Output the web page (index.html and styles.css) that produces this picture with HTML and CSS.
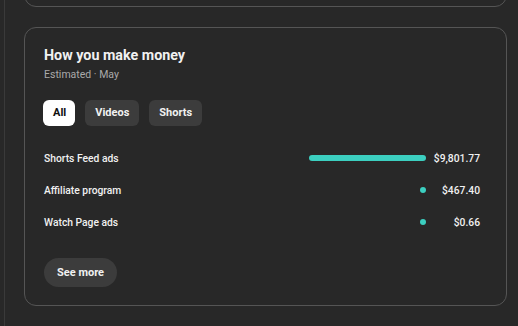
FILE: index.html
```html
<!DOCTYPE html>
<html lang="en">
<head>
    <meta charset="UTF-8">
    <title>Revenue</title>
    <link rel="stylesheet" href="styles.css">
</head>
<body>
<div class="page">
    <div class="card card-prev"></div>

    <div class="card money">
        <h2 class="title">How you make money</h2>
        <div class="sub">Estimated · May</div>

        <div class="chips">
            <span class="chip on">All</span>
            <span class="chip">Videos</span>
            <span class="chip">Shorts</span>
        </div>

        <div class="rows">
            <div class="row">
                <span class="label">Shorts Feed ads</span>
                <span class="track"><span class="bar" style="width: 117px"></span></span>
                <span class="value">$9,801.77</span>
            </div>
            <div class="row">
                <span class="label">Affiliate program</span>
                <span class="track"><span class="bar dot"></span></span>
                <span class="value">$467.40</span>
            </div>
            <div class="row">
                <span class="label">Watch Page ads</span>
                <span class="track"><span class="bar dot"></span></span>
                <span class="value">$0.66</span>
            </div>
        </div>

        <button class="more">See more</button>
    </div>
</div>
</body>
</html>
```

FILE: styles.css
```css
html, body {
    margin: 0;
    background-color: #282828;
    font-family: Roboto, "Liberation Sans", sans-serif;
    color: #f1f1f1;
}

.page {
    margin-left: 4px;
    border-left: 1px solid #3a3a3a;
    padding: 0 11px 0 19px;
    height: 326px;
    overflow: hidden;
}

.card {
    border: 1px solid #555;
    border-radius: 12px;
    box-sizing: border-box;
}

.card-prev {
    height: 40px;
    margin-top: -33px;
}

.money {
    margin-top: 20px;
    padding: 17px 26px 18px 19px;
}

.title {
    margin: 0;
    font-size: 14.3px;
    line-height: 20px;
    font-weight: 700;
}

.sub {
    margin-top: 3px;
    font-size: 10.5px;
    line-height: 14px;
    color: #aaa;
}

.chips {
    display: flex;
    gap: 10px;
    margin-top: 18px;
    margin-left: -1px;
}

.chip {
    height: 26px;
    line-height: 26px;
    padding: 0 10px;
    border-radius: 6px;
    background-color: #3c3c3c;
    font-size: 11px;
    font-weight: 700;
}

.chip.on {
    padding: 0 9px 0 10px;
    background-color: #fff;
    color: #0f0f0f;
}

.rows {
    margin-top: 16px;
}

.row {
    display: flex;
    align-items: center;
    height: 32px;
    font-size: 10.3px;
    font-weight: 500;
}

.label {
    flex: 1;
}

.track {
    width: 118px;
    display: flex;
    justify-content: flex-end;
}

.bar {
    height: 6px;
    border-radius: 3px;
    background-color: #3ccfc0;
}

.bar.dot {
    width: 6px;
}

.value {
    width: 54px;
    text-align: right;
}

.more {
    margin-top: 20px;
    height: 29px;
    padding: 0 13px;
    border: none;
    border-radius: 15px;
    background-color: #3c3c3c;
    color: #f1f1f1;
    font-family: inherit;
    font-size: 11px;
    font-weight: 700;
}
```
